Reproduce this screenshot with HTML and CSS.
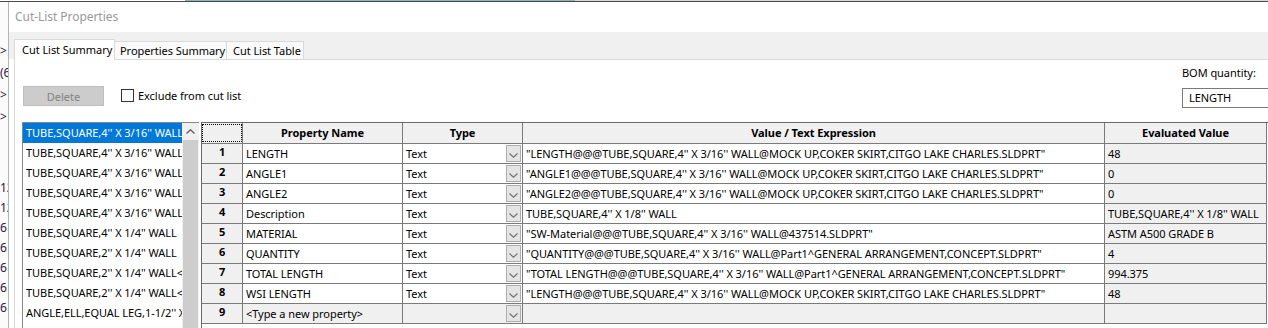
FILE: index.html
```html
<!DOCTYPE html>
<html lang="en">
<head>
    <meta charset="UTF-8">
    <title>Cut-List Properties</title>
    <link rel="stylesheet" href="styles.css">
</head>
<body>
    <div class="desktop-top"></div>
    <div class="desktop">
        <div class="behind">
            <div class="behind-top">
                <span>&gt;</span>
                <span>(6</span>
                <span>&gt;</span>
                <span>&gt;</span>
            </div>
            <div class="behind-bottom">
                <span>12</span>
                <span>12</span>
                <span>6</span>
                <span>6</span>
                <span>6</span>
                <span>6</span>
                <span>6</span>
            </div>
        </div>

        <div class="dialog">
            <div class="titlebar">Cut-List Properties</div>

            <div class="tabstrip">
                <div class="tab active">Cut List Summary</div>
                <div class="tab tab-props">Properties Summary</div>
                <div class="tab tab-table">Cut List Table</div>
            </div>

            <div class="tabpage">
                <div class="toolbar">
                    <button class="btn" disabled>Delete</button>
                    <label class="check"><span class="box"></span>Exclude from cut list</label>
                    <div class="bom">
                        <div class="bom-label">BOM quantity:</div>
                        <div class="bom-input">LENGTH</div>
                    </div>
                </div>

                <div class="workarea">
                    <div class="listbox">
                        <ul class="items">
                            <li class="selected">TUBE,SQUARE,4'' X 3/16'' WALL&lt;1&gt;</li>
                            <li>TUBE,SQUARE,4'' X 3/16'' WALL&lt;2&gt;</li>
                            <li>TUBE,SQUARE,4'' X 3/16'' WALL&lt;3&gt;</li>
                            <li>TUBE,SQUARE,4'' X 3/16'' WALL&lt;4&gt;</li>
                            <li>TUBE,SQUARE,4'' X 3/16'' WALL&lt;5&gt;</li>
                            <li>TUBE,SQUARE,4'' X 1/4'' WALL</li>
                            <li>TUBE,SQUARE,2'' X 1/4'' WALL</li>
                            <li>TUBE,SQUARE,2'' X 1/4'' WALL&lt;1&gt;</li>
                            <li>TUBE,SQUARE,2'' X 1/4'' WALL&lt;2&gt;</li>
                            <li>ANGLE,ELL,EQUAL LEG,1-1/2'' X 1-1/2''</li>
                        </ul>
                        <div class="vscroll">
                            <div class="arrow">
                                <svg width="9" height="5" viewBox="0 0 9 5"><polyline points="0.5,4.5 4.5,0.8 8.5,4.5" fill="none" stroke="#606060" stroke-width="1.4"/></svg>
                            </div>
                            <div class="thumb"></div>
                        </div>
                    </div>

                    <div class="grid-frame">
                        <div class="grid">
                            <div class="hd corner"><span class="focus"></span></div>
                            <div class="hd">Property Name</div>
                            <div class="hd">Type</div>
                            <div class="hd">Value / Text Expression</div>
                            <div class="hd">Evaluated Value</div>

                            <div class="num">1</div>
                            <div class="cell">LENGTH</div>
                            <div class="cell type"><span class="txt">Text</span><span class="drop"></span></div>
                            <div class="cell">"LENGTH@@@TUBE,SQUARE,4'' X 3/16'' WALL@MOCK UP,COKER SKIRT,CITGO LAKE CHARLES.SLDPRT"</div>
                            <div class="cell ro">48</div>

                            <div class="num">2</div>
                            <div class="cell">ANGLE1</div>
                            <div class="cell type"><span class="txt">Text</span><span class="drop"></span></div>
                            <div class="cell">"ANGLE1@@@TUBE,SQUARE,4'' X 3/16'' WALL@MOCK UP,COKER SKIRT,CITGO LAKE CHARLES.SLDPRT"</div>
                            <div class="cell ro">0</div>

                            <div class="num">3</div>
                            <div class="cell">ANGLE2</div>
                            <div class="cell type"><span class="txt">Text</span><span class="drop"></span></div>
                            <div class="cell">"ANGLE2@@@TUBE,SQUARE,4'' X 3/16'' WALL@MOCK UP,COKER SKIRT,CITGO LAKE CHARLES.SLDPRT"</div>
                            <div class="cell ro">0</div>

                            <div class="num">4</div>
                            <div class="cell">Description</div>
                            <div class="cell type"><span class="txt">Text</span><span class="drop"></span></div>
                            <div class="cell">TUBE,SQUARE,4'' X 1/8'' WALL</div>
                            <div class="cell ro">TUBE,SQUARE,4'' X 1/8'' WALL</div>

                            <div class="num">5</div>
                            <div class="cell">MATERIAL</div>
                            <div class="cell type"><span class="txt">Text</span><span class="drop"></span></div>
                            <div class="cell">"SW-Material@@@TUBE,SQUARE,4'' X 3/16'' WALL@437514.SLDPRT"</div>
                            <div class="cell ro">ASTM A500 GRADE B</div>

                            <div class="num">6</div>
                            <div class="cell">QUANTITY</div>
                            <div class="cell type"><span class="txt">Text</span><span class="drop"></span></div>
                            <div class="cell">"QUANTITY@@@TUBE,SQUARE,4'' X 3/16'' WALL@Part1^GENERAL ARRANGEMENT,CONCEPT.SLDPRT"</div>
                            <div class="cell ro">4</div>

                            <div class="num">7</div>
                            <div class="cell">TOTAL LENGTH</div>
                            <div class="cell type"><span class="txt">Text</span><span class="drop"></span></div>
                            <div class="cell">"TOTAL LENGTH@@@TUBE,SQUARE,4'' X 3/16'' WALL@Part1^GENERAL ARRANGEMENT,CONCEPT.SLDPRT"</div>
                            <div class="cell ro">994.375</div>

                            <div class="num">8</div>
                            <div class="cell">WSI LENGTH</div>
                            <div class="cell type"><span class="txt">Text</span><span class="drop"></span></div>
                            <div class="cell">"LENGTH@@@TUBE,SQUARE,4'' X 3/16'' WALL@MOCK UP,COKER SKIRT,CITGO LAKE CHARLES.SLDPRT"</div>
                            <div class="cell ro">48</div>

                            <div class="num">9</div>
                            <div class="cell ro">&lt;Type a new property&gt;</div>
                            <div class="cell ro type"><span class="txt"></span><span class="drop"></span></div>
                            <div class="cell ro"></div>
                            <div class="cell ro"></div>
                        </div>
                    </div>
                </div>
            </div>
        </div>
    </div>
</body>
</html>
```

FILE: styles.css
```css
body {
    margin: 0;
    width: 1268px;
    height: 328px;
    overflow: hidden;
    font-family: "Noto Sans", sans-serif;
    font-size: 11px;
    letter-spacing: -0.05px;
    color: #000;
    background: #ffffff;
}

.desktop-top {
    height: 2px;
    background:
        linear-gradient(to bottom, transparent 1px, #4a4a4a 1px),
        linear-gradient(to right, #ffffff 185px, #8fb3b5 185px, #8fb3b5 575px, #d8d8d8 575px);
}

.desktop {
    display: flex;
    height: 326px;
}

/* window behind the dialog */
.behind {
    width: 8px;
    overflow: hidden;
    background: #fbfbfb;
    color: #2a2040;
    font-size: 12px;
    line-height: 20px;
    white-space: nowrap;
}

.behind span {
    display: block;
}

.behind-top {
    padding-top: 38px;
    line-height: 22px;
}

.behind-bottom {
    padding-top: 50px;
}

.dialog {
    flex: 1;
    border-left: 1px solid #b4b4b4;
    display: flex;
    flex-direction: column;
    min-width: 0;
}

.titlebar {
    height: 30px;
    line-height: 30px;
    padding-left: 6px;
    font-size: 12px;
    color: #9a9a9a;
    background: #ffffff;
}

.tabstrip {
    height: 27px;
    background: #f0f0f0;
    padding-left: 5px;
    display: flex;
    align-items: flex-end;
    box-sizing: border-box;
}

.tab {
    height: 18px;
    line-height: 17px;
    padding-left: 5px;
    border: 1px solid #d9d9d9;
    border-bottom: none;
    border-left: none;
    background: #fafafa;
    box-sizing: border-box;
    white-space: nowrap;
}

.tab.active {
    width: 101px;
    height: 21px;
    line-height: 19px;
    padding-left: 7px;
    border-left: 1px solid #d9d9d9;
    background: #ffffff;
    margin-bottom: -1px;
    position: relative;
    z-index: 1;
}

.tab-props {
    width: 112px;
}

.tab-table {
    width: 77px;
    padding-left: 6px;
}

.tabpage {
    flex: 1;
    margin-left: 5px;
    border-left: 1px solid #d9d9d9;
    border-top: 1px solid #d9d9d9;
    background: #ffffff;
    display: flex;
    flex-direction: column;
    min-width: 0;
}

.toolbar {
    height: 62px;
    display: flex;
    align-items: flex-start;
    padding-left: 8px;
}

.btn {
    margin-top: 26px;
    width: 81px;
    height: 20px;
    background: #cccccc;
    border: 1px solid #bfbfbf;
    color: #838383;
    font-family: inherit;
    font-size: 11px;
    padding: 0;
}

.check {
    margin-top: 29px;
    margin-left: 17px;
    display: flex;
    align-items: center;
    height: 13px;
    white-space: nowrap;
}

.check .box {
    width: 11px;
    height: 11px;
    border: 1px solid #333333;
    background: #ffffff;
    margin-right: 4px;
}

.bom {
    margin-left: auto;
    width: 86px;
    padding-top: 6px;
    white-space: nowrap;
}

.bom-label {
    line-height: 14px;
}

.bom-input {
    margin-top: 8px;
    width: 110px;
    height: 20px;
    line-height: 18px;
    border: 1px solid #7a7a7a;
    box-sizing: border-box;
    padding-left: 6px;
}

.workarea {
    flex: 1;
    display: flex;
    min-height: 0;
}

.listbox {
    margin-left: 7px;
    width: 177px;
    border-left: 1px solid #828790;
    border-top: 1px solid #828790;
    display: flex;
    box-sizing: border-box;
}

.items {
    list-style: none;
    margin: 0;
    padding: 0;
    width: 159px;
    overflow: hidden;
}

.items li {
    height: 20px;
    line-height: 19px;
    padding-left: 3px;
    white-space: nowrap;
    overflow: hidden;
}

.items li.selected {
    background: #0078d7;
    color: #ffffff;
}

.vscroll {
    width: 17px;
    background: #f0f0f0;
    display: flex;
    flex-direction: column;
}

.vscroll .arrow {
    height: 17px;
    display: flex;
    align-items: center;
    justify-content: center;
}

.vscroll .thumb {
    flex: 1;
    margin: 0 1px;
    background: #cdcdcd;
}

.grid-frame {
    flex: 1;
    margin-left: 2px;
    border-left: 1px solid #696969;
    border-top: 1px solid #696969;
    overflow: hidden;
    min-width: 0;
}

.grid {
    display: grid;
    grid-template-columns: 41px 160px 120px 582px 162px;
    grid-auto-rows: 20px;
    grid-template-rows: 21px;
}

.grid > div {
    border-right: 1px solid #7a7a7a;
    border-bottom: 1px solid #7a7a7a;
    box-sizing: border-box;
    white-space: nowrap;
    overflow: hidden;
}

.hd {
    background: #f0f0f0;
    font-weight: bold;
    text-align: center;
    line-height: 20px;
}

.corner {
    position: relative;
}

.corner .focus {
    position: absolute;
    left: 0;
    top: 1px;
    right: 0;
    bottom: 1px;
    border: 1px dotted #000000;
}

.num {
    background: #f0f0f0;
    font-weight: bold;
    text-align: center;
    line-height: 16px;
}

.cell {
    background: #ffffff;
    padding-left: 3px;
    line-height: 19px;
}

.cell.ro {
    background: #f0f0f0;
}

.cell.type {
    display: flex;
    align-items: center;
    padding-right: 1px;
}

.cell.type .txt {
    flex: 1;
}

.drop {
    width: 15px;
    height: 17px;
    box-sizing: border-box;
    border: 1px solid #adadad;
    background: #e5e5e5 url("data:image/svg+xml,%3Csvg xmlns='http://www.w3.org/2000/svg' width='9' height='5'%3E%3Cpolyline points='0.5,0.5 4.5,4.2 8.5,0.5' fill='none' stroke='%23707070' stroke-width='1.1'/%3E%3C/svg%3E") no-repeat center 7px;
}
```
